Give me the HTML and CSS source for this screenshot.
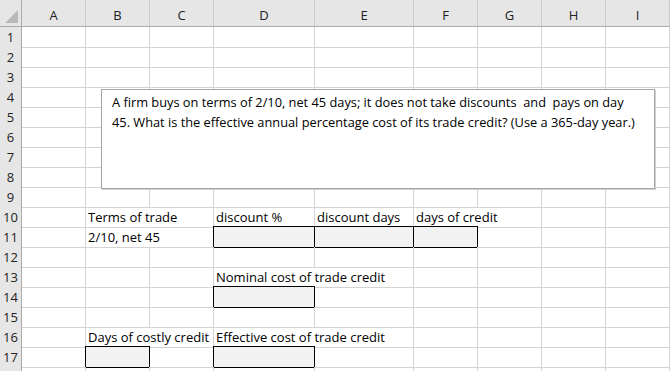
FILE: index.html
```html
<!DOCTYPE html>
<html lang="en">
<head>
    <meta charset="UTF-8">
    <meta name="viewport" content="width=device-width, initial-scale=1.0">
    <title>Trade credit</title>
    <link rel="stylesheet" href="styles.css">
</head>
<body>
    <div class="sheet">
        <div class="row head">
            <div class="corner">
                <svg width="13" height="13" viewBox="0 0 13 13"><polygon points="13,0 13,13 0,13" fill="#b9b9b9"/></svg>
            </div>
            <div class="col-head">A</div>
            <div class="col-head">B</div>
            <div class="col-head">C</div>
            <div class="col-head">D</div>
            <div class="col-head">E</div>
            <div class="col-head">F</div>
            <div class="col-head">G</div>
            <div class="col-head">H</div>
            <div class="col-head">I</div>
        </div>

        <div class="row">
            <div class="row-head">1</div>
            <div class="cell"></div><div class="cell"></div><div class="cell"></div><div class="cell"></div><div class="cell"></div><div class="cell"></div><div class="cell"></div><div class="cell"></div><div class="cell"></div>
        </div>
        <div class="row">
            <div class="row-head">2</div>
            <div class="cell"></div><div class="cell"></div><div class="cell"></div><div class="cell"></div><div class="cell"></div><div class="cell"></div><div class="cell"></div><div class="cell"></div><div class="cell"></div>
        </div>
        <div class="row">
            <div class="row-head">3</div>
            <div class="cell"></div><div class="cell"></div><div class="cell"></div><div class="cell"></div><div class="cell"></div><div class="cell"></div><div class="cell"></div><div class="cell"></div><div class="cell"></div>
        </div>
        <div class="row">
            <div class="row-head">4</div>
            <div class="cell"></div><div class="cell"></div><div class="cell"></div><div class="cell"></div><div class="cell"></div><div class="cell"></div><div class="cell"></div><div class="cell"></div><div class="cell"></div>
        </div>
        <div class="row">
            <div class="row-head">5</div>
            <div class="cell"></div><div class="cell"></div><div class="cell"></div><div class="cell"></div><div class="cell"></div><div class="cell"></div><div class="cell"></div><div class="cell"></div><div class="cell"></div>
        </div>
        <div class="row">
            <div class="row-head">6</div>
            <div class="cell"></div><div class="cell"></div><div class="cell"></div><div class="cell"></div><div class="cell"></div><div class="cell"></div><div class="cell"></div><div class="cell"></div><div class="cell"></div>
        </div>
        <div class="row">
            <div class="row-head">7</div>
            <div class="cell"></div><div class="cell"></div><div class="cell"></div><div class="cell"></div><div class="cell"></div><div class="cell"></div><div class="cell"></div><div class="cell"></div><div class="cell"></div>
        </div>
        <div class="row">
            <div class="row-head">8</div>
            <div class="cell"></div><div class="cell"></div><div class="cell"></div><div class="cell"></div><div class="cell"></div><div class="cell"></div><div class="cell"></div><div class="cell"></div><div class="cell"></div>
        </div>
        <div class="row">
            <div class="row-head">9</div>
            <div class="cell"></div><div class="cell"></div><div class="cell"></div><div class="cell"></div><div class="cell"></div><div class="cell"></div><div class="cell"></div><div class="cell"></div><div class="cell"></div>
        </div>
        <div class="row">
            <div class="row-head">10</div>
            <div class="cell"></div>
            <div class="cell spill">Terms of trade</div>
            <div class="cell"></div>
            <div class="cell">discount %</div>
            <div class="cell">discount days</div>
            <div class="cell spill">days of credit</div>
            <div class="cell"></div><div class="cell"></div><div class="cell"></div>
        </div>
        <div class="row">
            <div class="row-head">11</div>
            <div class="cell"></div>
            <div class="cell spill">2/10, net 45</div>
            <div class="cell"></div>
            <div class="cell input"></div>
            <div class="cell input"></div>
            <div class="cell input"></div>
            <div class="cell"></div><div class="cell"></div><div class="cell"></div>
        </div>
        <div class="row">
            <div class="row-head">12</div>
            <div class="cell"></div><div class="cell"></div><div class="cell"></div><div class="cell"></div><div class="cell"></div><div class="cell"></div><div class="cell"></div><div class="cell"></div><div class="cell"></div>
        </div>
        <div class="row">
            <div class="row-head">13</div>
            <div class="cell"></div><div class="cell"></div><div class="cell"></div>
            <div class="cell spill">Nominal cost of trade credit</div>
            <div class="cell"></div><div class="cell"></div><div class="cell"></div><div class="cell"></div><div class="cell"></div>
        </div>
        <div class="row">
            <div class="row-head">14</div>
            <div class="cell"></div><div class="cell"></div><div class="cell"></div>
            <div class="cell input"></div>
            <div class="cell"></div><div class="cell"></div><div class="cell"></div><div class="cell"></div><div class="cell"></div>
        </div>
        <div class="row">
            <div class="row-head">15</div>
            <div class="cell"></div><div class="cell"></div><div class="cell"></div><div class="cell"></div><div class="cell"></div><div class="cell"></div><div class="cell"></div><div class="cell"></div><div class="cell"></div>
        </div>
        <div class="row">
            <div class="row-head">16</div>
            <div class="cell"></div>
            <div class="cell spill">Days of costly credit</div>
            <div class="cell"></div>
            <div class="cell spill">Effective cost of trade credit</div>
            <div class="cell"></div><div class="cell"></div><div class="cell"></div><div class="cell"></div><div class="cell"></div>
        </div>
        <div class="row">
            <div class="row-head">17</div>
            <div class="cell"></div>
            <div class="cell input"></div>
            <div class="cell"></div>
            <div class="cell input"></div>
            <div class="cell"></div><div class="cell"></div><div class="cell"></div><div class="cell"></div><div class="cell"></div>
        </div>
        <!-- row 18 is cut off by the window, only its grid lines show -->
        <div class="row">
            <div class="row-head"></div>
            <div class="cell"></div><div class="cell"></div><div class="cell"></div><div class="cell"></div><div class="cell"></div><div class="cell"></div><div class="cell"></div><div class="cell"></div><div class="cell"></div>
        </div>

        <!-- text box floating over rows 4-9 -->
        <div class="textbox">A firm buys on terms of 2/10, net 45 days; it does not take discounts&nbsp; and&nbsp; pays on day<br>45. What is the effective annual percentage cost of its trade credit? (Use a 365-day year.)</div>
    </div>
</body>
</html>
```

FILE: styles.css
```css
body {
    margin: 0;
    background: #fff;
    font-family: "Open Sans", "Liberation Sans", sans-serif;
    font-size: 13px;
    color: #000;
    overflow: hidden;
}

.sheet {
    position: relative;
    width: 670px;
}

.row {
    display: grid;
    grid-template-columns: 22px 64px 64px 64px 101px 99px 64px 64px 64px 64px;
    height: 20px;
}

.row.head {
    height: 27px;
    background: #e6e6e6;
}

.corner {
    display: flex;
    justify-content: flex-end;
    align-items: flex-end;
    padding: 0 3px 3px 0;
    border-right: 1px solid #ababab;
    border-bottom: 1px solid #ababab;
}

.col-head {
    text-align: center;
    color: #222;
    padding-top: 5px;
    line-height: 21px;
    border-right: 1px solid #cacaca;
    border-bottom: 1px solid #ababab;
}

.row-head {
    background: #e6e6e6;
    color: #222;
    text-align: center;
    line-height: 20px;
    border-right: 1px solid #ababab;
    border-bottom: 1px solid #cacaca;
}

.cell {
    line-height: 20px;
    padding-left: 2px;
    white-space: pre;
    border-right: 1px solid #d4d4d4;
    border-bottom: 1px solid #d4d4d4;
}

.spill {
    border-right-color: transparent;
}

.input {
    margin: -1px 0 0 -1px;
    border: 1px solid #000;
    background: #f2f2f2;
}

.textbox {
    position: absolute;
    left: 101px;
    top: 89px;
    width: 554px;
    height: 100px;
    box-sizing: border-box;
    padding: 2px 10px;
    font-size: 12.8px;
    line-height: 20px;
    background: #fff;
    border: 1px solid #a6a6a6;
    box-shadow: 1px 1px 0 #d0d0d0;
    white-space: nowrap;
}
```
